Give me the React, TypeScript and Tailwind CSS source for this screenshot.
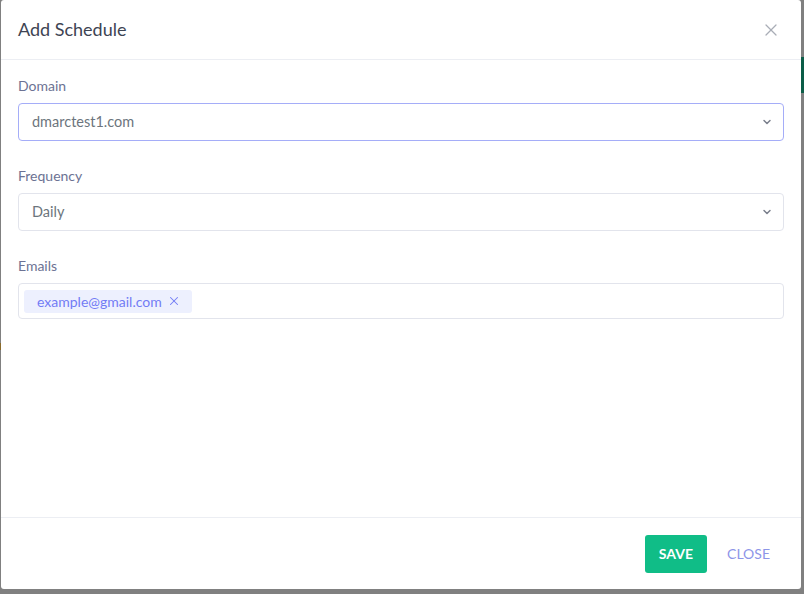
import { ChevronDown, X } from "lucide-react";

const font = { fontFamily: 'Lato, "Open Sans", sans-serif' };

function SelectField({ label, value, focused }: { label: string; value: string; focused?: boolean }) {
  return (
    <div className="mb-[26px]">
      <label className="mb-[9px] block text-[14px] leading-[17px] text-[#6c7293]">{label}</label>
      <div
        className={
          "flex h-[38px] items-center justify-between rounded-[4px] border bg-white pl-[13px] pr-[10px] " +
          (focused ? "border-[#a5adf8]" : "border-[#e2e4ec]")
        }
      >
        <span className="text-[14.5px] text-[#6c757d]">{value}</span>
        <ChevronDown size={12} strokeWidth={3} className="text-[#7a7f8c]" />
      </div>
    </div>
  );
}

export default function App() {
  return (
    <div className="relative h-[594px] w-[804px] overflow-hidden bg-[#808080]" style={font}>
      {/* bits of the page behind the backdrop */}
      <div className="absolute right-0 top-[57px] h-[36px] w-[3px] bg-[#0b5d47]" />
      <div className="absolute left-0 top-[343px] h-[7px] w-[1px] bg-[#8a6a2a]" />

      <div className="absolute left-[1px] top-0 flex h-[589px] w-[800px] flex-col rounded-[3px] bg-white">
        <div className="flex h-[60px] shrink-0 items-center justify-between border-b border-[#eceef3] pl-[17px] pr-[20px]">
          <h5 className="text-[18px] text-[#3e4453]">Add Schedule</h5>
          <X size={20} strokeWidth={1.5} className="text-[#a9adb6]" />
        </div>

        <div className="flex-1 px-[17px] pt-[17px]">
          <SelectField label="Domain" value="dmarctest1.com" focused />
          <SelectField label="Frequency" value="Daily" />
          <div>
            <label className="mb-[9px] block text-[14px] leading-[17px] text-[#6c7293]">Emails</label>
            <div className="flex h-[36px] items-center rounded-[4px] border border-[#e2e4ec] px-[5px]">
              <span className="flex h-[23px] items-center gap-[5px] rounded-[3px] bg-[#edf0fe] pl-[13px] pr-[11px] text-[14px] text-[#727cf5]">
                example@gmail.com
                <X size={14} strokeWidth={1.8} />
              </span>
            </div>
          </div>
        </div>

        <div className="flex h-[72px] shrink-0 items-center justify-end gap-[20px] border-t border-[#eceef3] pr-[31px]">
          <button className="h-[38px] rounded-[3px] bg-[#10bd87] px-[14px] text-[14px] font-bold text-white">SAVE</button>
          <button className="text-[14px] text-[#8d95e8]">CLOSE</button>
        </div>
      </div>
    </div>
  );
}
